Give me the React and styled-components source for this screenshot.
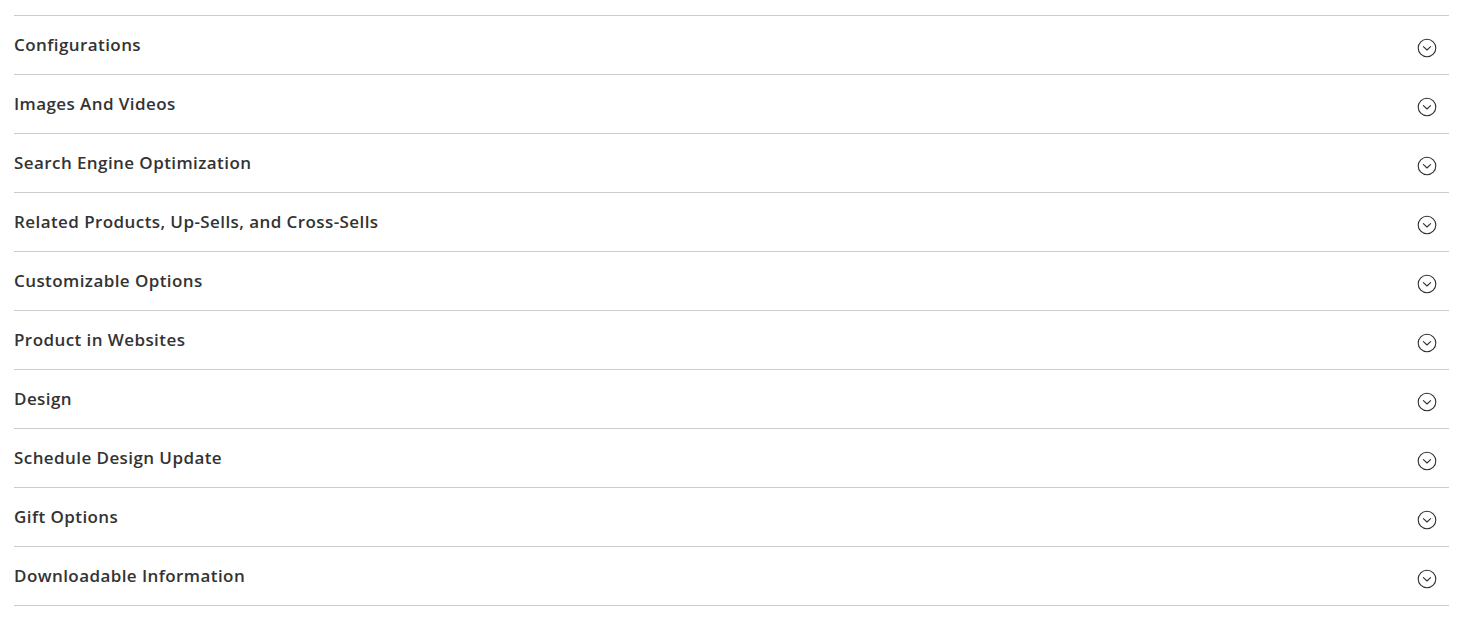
import React from "react";
import styled, { createGlobalStyle } from "styled-components";

const Global = createGlobalStyle`
  html, body { margin: 0; padding: 0; background: #fff; }
  body { font-family: "Open Sans", "Liberation Sans", sans-serif; }
`;

const Page = styled.div`
  padding: 15px 13px 0 14px;
`;

const List = styled.div`
  border-top: 1px solid #cccccc;
`;

const Section = styled.div`
  display: flex;
  align-items: center;
  justify-content: space-between;
  height: 58px;
  border-bottom: 1px solid #cccccc;
`;

const Title = styled.span`
  font-size: 17px;
  font-weight: 600;
  color: #333333;
  letter-spacing: 0.42px;
  margin-top: -1px;
`;

const Toggle = styled.span`
  display: flex;
  width: 20px;
  height: 20px;
  margin-right: 12px;
  margin-top: 5px;
`;

const Chevron = () => (
  <svg width="20" height="20" viewBox="0 0 20 20" fill="none">
    <circle cx="10" cy="10" r="8.8" stroke="#303030" strokeWidth="1.1" />
    <path d="M6.4 8.7 L10 12 L13.6 8.7" stroke="#303030" strokeWidth="1.1" strokeLinecap="round" strokeLinejoin="round" />
  </svg>
);

const items = [
  "Configurations",
  "Images And Videos",
  "Search Engine Optimization",
  "Related Products, Up-Sells, and Cross-Sells",
  "Customizable Options",
  "Product in Websites",
  "Design",
  "Schedule Design Update",
  "Gift Options",
  "Downloadable Information",
];

export default function App() {
  return (
    <Page>
      <Global />
      <List>
        {items.map((t) => (
          <Section key={t}>
            <Title>{t}</Title>
            <Toggle><Chevron /></Toggle>
          </Section>
        ))}
      </List>
    </Page>
  );
}
